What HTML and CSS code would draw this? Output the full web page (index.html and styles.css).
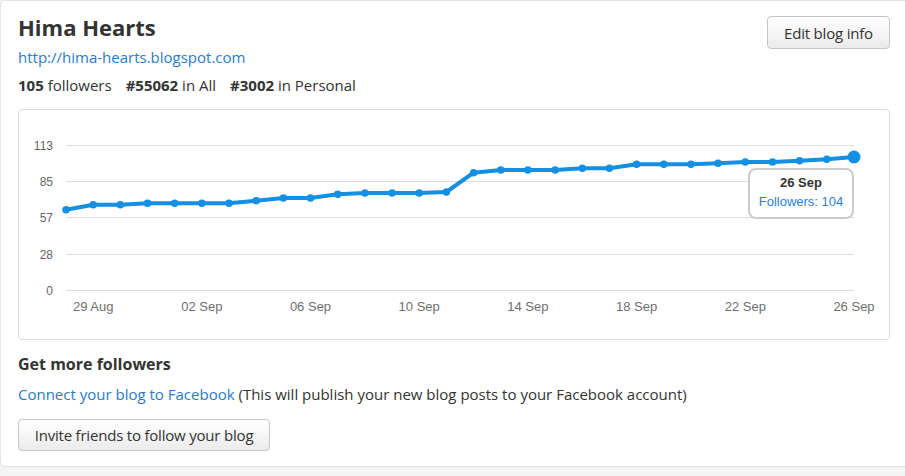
FILE: index.html
```html
<!DOCTYPE html>
<html>
<head>
<meta charset="utf-8">
<link rel="stylesheet" href="styles.css">
</head>
<body>
<div class="card">
  <div class="header">
    <div class="info">
      <h1 class="title">Hima Hearts</h1>
      <a class="link blog-url" href="#">http://hima-hearts.blogspot.com</a>
      <div class="stats">
        <span class="stat"><b>105</b> followers</span>
        <span class="stat"><b>#55062</b> in All</span>
        <span class="stat"><b>#3002</b> in Personal</span>
      </div>
    </div>
    <button class="btn edit-btn">Edit blog info</button>
  </div>

  <div class="chart">
    <svg class="chart-svg" width="870" height="229" viewBox="0 0 870 229">
      <g class="grid">
        <line x1="47" y1="35.5" x2="835" y2="35.5"/>
        <line x1="47" y1="71.5" x2="835" y2="71.5"/>
        <line x1="47" y1="107.5" x2="835" y2="107.5"/>
        <line x1="47" y1="144.5" x2="835" y2="144.5"/>
        <line x1="47" y1="180.5" x2="835" y2="180.5"/>
      </g>
      <g class="ylabels">
        <text x="34" y="40">113</text>
        <text x="34" y="76">85</text>
        <text x="34" y="112">57</text>
        <text x="34" y="149">28</text>
        <text x="34" y="185">0</text>
      </g>
      <g class="xlabels">
        <text x="74.2" y="201">29 Aug</text>
        <text x="182.9" y="201">02 Sep</text>
        <text x="291.5" y="201">06 Sep</text>
        <text x="400.2" y="201">10 Sep</text>
        <text x="508.9" y="201">14 Sep</text>
        <text x="617.6" y="201">18 Sep</text>
        <text x="726.3" y="201">22 Sep</text>
        <text x="835" y="201">26 Sep</text>
      </g>
      <polyline class="series" points="47,99.7 74.2,94.7 101.3,94.7 128.5,93.3 155.7,93.3 182.9,93.3 210,93.3 237.2,90.7 264.4,88 291.5,88 318.7,84.3 345.9,83 373.1,83 400.2,83 427.4,82 454.6,62.7 481.8,60 508.9,60 536.1,60 563.3,58.3 590.4,58.3 617.6,54.3 644.8,54.3 672,54.3 699.1,53.3 726.3,52 753.5,52 780.6,50.7 807.8,49.3 835,47"/>
      <g class="dots">
        <circle cx="47" cy="99.7" r="3.8"/>
        <circle cx="74.2" cy="94.7" r="3.8"/>
        <circle cx="101.3" cy="94.7" r="3.8"/>
        <circle cx="128.5" cy="93.3" r="3.8"/>
        <circle cx="155.7" cy="93.3" r="3.8"/>
        <circle cx="182.9" cy="93.3" r="3.8"/>
        <circle cx="210" cy="93.3" r="3.8"/>
        <circle cx="237.2" cy="90.7" r="3.8"/>
        <circle cx="264.4" cy="88" r="3.8"/>
        <circle cx="291.5" cy="88" r="3.8"/>
        <circle cx="318.7" cy="84.3" r="3.8"/>
        <circle cx="345.9" cy="83" r="3.8"/>
        <circle cx="373.1" cy="83" r="3.8"/>
        <circle cx="400.2" cy="83" r="3.8"/>
        <circle cx="427.4" cy="82" r="3.8"/>
        <circle cx="454.6" cy="62.7" r="3.8"/>
        <circle cx="481.8" cy="60" r="3.8"/>
        <circle cx="508.9" cy="60" r="3.8"/>
        <circle cx="536.1" cy="60" r="3.8"/>
        <circle cx="563.3" cy="58.3" r="3.8"/>
        <circle cx="590.4" cy="58.3" r="3.8"/>
        <circle cx="617.6" cy="54.3" r="3.8"/>
        <circle cx="644.8" cy="54.3" r="3.8"/>
        <circle cx="672" cy="54.3" r="3.8"/>
        <circle cx="699.1" cy="53.3" r="3.8"/>
        <circle cx="726.3" cy="52" r="3.8"/>
        <circle cx="753.5" cy="52" r="3.8"/>
        <circle cx="780.6" cy="50.7" r="3.8"/>
        <circle cx="807.8" cy="49.3" r="3.8"/>
        <circle cx="835" cy="47" r="6.5"/>
      </g>
    </svg>
    <div class="tooltip">
      <div class="tip-date">26 Sep</div>
      <div class="tip-value">Followers: 104</div>
    </div>
  </div>

  <h2 class="section-title">Get more followers</h2>
  <p class="connect"><a class="link" href="#">Connect your blog to Facebook</a> (This will publish your new blog posts to your Facebook account)</p>
  <button class="btn invite-btn">Invite friends to follow your blog</button>
</div>
</body>
</html>
```
FILE: styles.css
```css
html, body {
  margin: 0;
  padding: 0;
  overflow: hidden;
}
body {
  background: #f4f4f4;
  font-family: "Open Sans", "Liberation Sans", sans-serif;
  color: #333;
  font-size: 15px;
}
.card {
  box-sizing: border-box;
  width: 908px;
  background: #fff;
  border: 1px solid #e2e2e2;
  border-radius: 4px;
  padding: 13px 17px 15px 17px;
  display: flex;
  flex-direction: column;
  align-items: flex-start;
}
.header {
  display: flex;
  justify-content: space-between;
  align-items: flex-start;
  width: 872px;
}
.info {
  display: flex;
  flex-direction: column;
  align-items: flex-start;
}
.title {
  margin: 0;
  font-size: 22px;
  line-height: 26px;
  font-weight: 700;
  color: #333;
}
.link {
  color: #2a7bc8;
  text-decoration: none;
}
.blog-url {
  margin-top: 7px;
  line-height: 20px;
}
.stats {
  margin-top: 8px;
  line-height: 20px;
  display: flex;
  gap: 14px;
}
.stats b {
  font-weight: 700;
}
.btn {
  font-family: "Open Sans", "Liberation Sans", sans-serif;
  font-size: 15px;
  letter-spacing: -0.2px;
  color: #333;
  background: linear-gradient(#ffffff, #ebebeb);
  border: 1px solid #c6c6c6;
  border-radius: 4px;
  padding: 0;
  box-sizing: border-box;
  white-space: nowrap;
  cursor: pointer;
}
.edit-btn {
  margin-top: 2px;
  height: 33px;
  width: 123px;
}
.chart {
  position: relative;
  box-sizing: border-box;
  margin-top: 14px;
  width: 872px;
  height: 231px;
  border: 1px solid #dcdcdc;
  border-radius: 4px;
}
.chart-svg {
  display: block;
}
.grid line {
  stroke: #dddddd;
  stroke-width: 1;
}
.ylabels text {
  font-family: "Liberation Sans", Arial, sans-serif;
  font-size: 12px;
  fill: #666;
  text-anchor: end;
}
.xlabels text {
  font-family: "Liberation Sans", Arial, sans-serif;
  font-size: 13px;
  fill: #6e6e6e;
  text-anchor: middle;
}
.series {
  fill: none;
  stroke: #138fe3;
  stroke-width: 4;
  stroke-linejoin: round;
}
.dots circle {
  fill: #138fe3;
}
.tooltip {
  position: absolute;
  left: 729px;
  top: 58px;
  box-sizing: border-box;
  width: 106px;
  height: 51px;
  padding-top: 3px;
  background: rgba(255, 255, 255, 0.95);
  border: 2px solid #cbcbcb;
  border-radius: 8px;
  font-family: "Liberation Sans", Arial, sans-serif;
  font-size: 13px;
  line-height: 19px;
  text-align: center;
}
.tip-date {
  font-weight: 700;
  color: #333;
}
.tip-value {
  color: #2f7ed8;
}
.section-title {
  margin: 13px 0 0 0;
  font-size: 16px;
  line-height: 22px;
  font-weight: 700;
  color: #333;
}
.connect {
  margin: 9px 0 0 0;
  line-height: 20px;
}
.invite-btn {
  margin-top: 15px;
  height: 32px;
  width: 252px;
}
```
